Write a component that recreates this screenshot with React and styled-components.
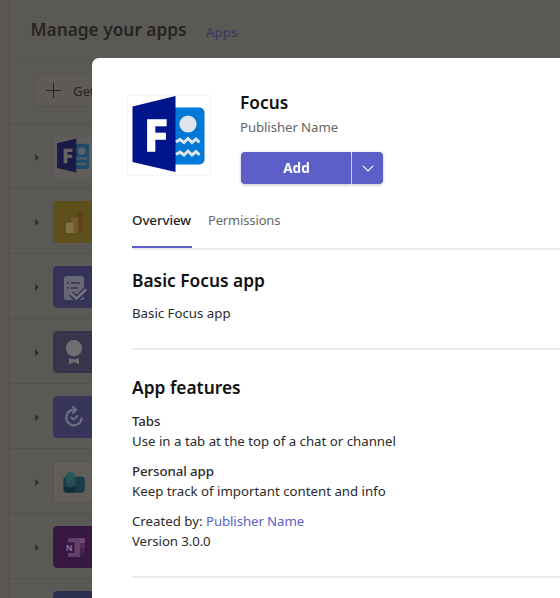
import React from 'react';
import styled, { createGlobalStyle } from 'styled-components';

const GlobalStyle = createGlobalStyle`
  * { box-sizing: border-box; }
  body {
    margin: 0;
    overflow: hidden;
    font-family: 'Noto Sans', 'Open Sans', sans-serif;
    font-size: 13.25px;
    line-height: 20px;
    color: #2b2b2b;
  }
`;

const Screen = styled.div`
  position: relative;
  display: flex;
  width: 100vw;
  height: 100vh;
  overflow: hidden;
  background: #5b5955;
`;

const Rail = styled.div`
  flex: 0 0 10px;
  background: linear-gradient(90deg, #5a5755 0 5px, #565254);
`;

const Page = styled.main`
  flex: 1;
  min-width: 0;
`;

const PageHeader = styled.header`
  display: flex;
  align-items: baseline;
  height: 60px;
  padding: 17px 0 0 20.5px;
  border-bottom: 1px solid #565351;
`;

const PageTitle = styled.h1`
  margin: 0 19px 0 0;
  font-size: 17.3px;
  line-height: 26px;
  font-weight: 600;
  color: #252422;
`;

const PageLink = styled.a`
  position: relative;
  top: 1px;
  font-size: 13.4px;
  font-weight: 500;
  color: #3b3a5e;
`;

const Toolbar = styled.div`
  height: 64px;
  padding: 15px 0 0 24px;
  border-bottom: 1px solid #52504d;
`;

const GetButton = styled.button`
  display: flex;
  align-items: center;
  gap: 11px;
  width: 140px;
  height: 32px;
  padding: 0 0 0 11px;
  border: 1px solid #555250;
  border-radius: 4px;
  background: #5d5a57;
  color: #252422;
  font: inherit;
  white-space: nowrap;
`;

const AppRow = styled.div`
  display: flex;
  align-items: center;
  height: 65px;
  padding: 2px 0 0 25px;
  border-bottom: 1px solid #52504d;
`;

const Caret = styled.svg`
  flex: none;
  width: 5px;
  height: 7px;
  margin-right: 13px;
`;

const Tile = styled.div`
  flex: none;
  display: flex;
  width: 42px;
  height: 42px;
  border-radius: 4px;
  background: ${(p) => p.$color};
  border: 1px solid ${(p) => p.$edge || p.$color};

  svg {
    flex: none;
    width: 42px;
    height: 42px;
    margin: -1px;
  }
`;

const Dialog = styled.section`
  position: absolute;
  top: 58px;
  left: 92px;
  right: 0;
  bottom: 0;
  padding: 36px 0 0 40px;
  overflow: hidden;
  border-radius: 7px 0 0 0;
  background: #fff;
`;

const Summary = styled.div`
  display: flex;
  height: 114px;
`;

const LogoFrame = styled.div`
  flex: none;
  width: 86px;
  height: 84px;
  margin: 0 28px 0 -6px;

  svg {
    display: block;
    width: 86px;
    height: 84px;
    filter: blur(0.7px);
  }
`;

const SummaryText = styled.div`
  display: flex;
  flex-direction: column;
  align-items: flex-start;
`;

const AppName = styled.h2`
  margin: -3px 0 1px;
  font-size: 17.3px;
  line-height: 24px;
  font-weight: 600;
  color: #111;
`;

const Publisher = styled.div`
  height: 20px;
  margin-top: 1px;
  letter-spacing: -0.1px;
  color: #666;
`;

const SplitButton = styled.div`
  display: flex;
  gap: 1px;
  height: 32px;
  margin: 15px 0 0 1px;
  filter: drop-shadow(0 1px 1.5px rgba(0, 0, 0, 0.25));
`;

const AddButton = styled.button`
  width: 110px;
  padding: 0 0 0 1px;
  border: 0;
  border-radius: 4px 0 0 4px;
  background: #5b5fc7;
  color: #fff;
  font: inherit;
  font-size: 13.6px;
  font-weight: 700;
`;

const MenuButton = styled.button`
  display: flex;
  align-items: center;
  justify-content: center;
  width: 31px;
  padding: 0;
  border: 0;
  border-radius: 0 4px 4px 0;
  background: #5b5fc7;
`;

const Tabs = styled.nav`
  display: flex;
  gap: 16px;
  height: 42px;
  border-bottom: 2px solid #ebebeb;
`;

const Tab = styled.a`
  width: ${(p) => (p.$active ? '60px' : 'auto')};
  height: 40px;
  padding-top: 2px;
  white-space: nowrap;
  font-size: ${(p) => (p.$active ? '13.4px' : '12.9px')};
  font-weight: ${(p) => (p.$active ? 500 : 400)};
  letter-spacing: -0.1px;
  color: ${(p) => (p.$active ? '#242424' : '#666')};
  border-bottom: ${(p) => (p.$active ? '2px solid #5b5fc7' : '0')};
`;

const Section = styled.section`
  padding: ${(p) => p.$padding};
  border-bottom: 2px solid #ebebeb;
  white-space: nowrap;
`;

const SectionTitle = styled.h3`
  margin: 0 0 ${(p) => p.$gap};
  font-size: 17.35px;
  line-height: 24px;
  font-weight: 600;
  color: #111;
`;

const Feature = styled.div`
  margin-bottom: 10px;
`;

const FeatureName = styled.div`
  font-weight: 500;
  font-size: 13.3px;
  letter-spacing: -0.1px;
`;

const Line = styled.div`
  height: 20px;
`;

const VersionLine = styled(Line)`
  letter-spacing: -0.1px;
`;

const PublisherLink = styled.a`
  letter-spacing: -0.1px;
  color: #5b5fc7;
`;

function FocusArt({ dark, light, ink, dot, frame }) {
  return (
    <>
      <rect x="1.5" y="1.5" width="83" height="80" fill={frame ? '#fff' : 'none'} stroke={frame || 'none'} />
      <rect x="42" y="13.5" width="36.5" height="57" rx="5" fill={light} />
      <path d="M6.5 12.5 49.5 2v76L6.5 68Z" fill={dark} />
      <text
        x="18"
        y="56.5"
        fontFamily="Noto Sans, sans-serif"
        fontSize="43"
        fontWeight="700"
        textLength="24"
        lengthAdjust="spacingAndGlyphs"
        fill={ink}
        stroke={ink}
        strokeWidth="1.6"
      >
        F
      </text>
      <circle cx="62" cy="30" r="8.6" fill={dot} />
      <path
        d="M50 48 54 45.5 58 48.5 62 44.5 66 48.5 70 45 73.5 48.5M50 60.5 54 58 58 61 62 57 66 61 70 57.5 73.5 61"
        fill="none"
        stroke={dot}
        strokeWidth="3"
      />
    </>
  );
}

const icons = {
  focus: (
    <svg viewBox="0 0 42 42">
      <g transform="translate(1.2 1.7) scale(.445)">
        <FocusArt dark="#191b46" light="#1f4b69" ink="#686665" dot="#596166" />
      </g>
    </svg>
  ),
  powerbi: (
    <svg viewBox="0 0 42 42">
      <rect x="24" y="10" width="5.5" height="22" rx="1" fill="#5d421b" />
      <rect x="18" y="16" width="7.5" height="16" rx="1" fill="#70592b" />
      <rect x="13" y="21.5" width="7.5" height="10.5" rx="1" fill="#827248" />
    </svg>
  ),
  approvals: (
    <svg viewBox="0 0 42 42">
      <rect x="11" y="10" width="20" height="24" rx="2.5" fill="#686775" />
      <path d="M14 17h2m2 0h9M14 22h2m2 0h7" stroke="#35335a" strokeWidth="1.5" fill="none" />
      <path d="M18 27.5 23.5 33 33 24" stroke="#353357" strokeWidth="6" fill="none" />
      <path
        d="M18.5 28 23.5 32.5 32.5 24"
        stroke="#73717d"
        strokeWidth="2.6"
        strokeLinecap="round"
        strokeLinejoin="round"
        fill="none"
      />
    </svg>
  ),
  praise: (
    <svg viewBox="0 0 42 42">
      <circle cx="21" cy="17.3" r="8.2" fill="#6f6e73" />
      <path d="M16 27c3.2 1.6 6.8 1.6 10 0v6.5l-5-2.6-5 2.6Z" fill="#6f6e73" />
    </svg>
  ),
  updates: (
    <svg viewBox="0 0 42 42" fill="none" stroke="#73717f" strokeWidth="2.1">
      <path d="M17 15a7.7 7.7 0 1 0 11.7 6.5M15.5 15.8A7.7 7.7 0 0 1 22 13.8" />
      <path d="m19.5 10.5 3.5 3.3-3.5 3.7" />
      <path d="m17.8 21 2.7 2.6 4.5-4.2" strokeWidth="1.8" />
    </svg>
  ),
  viva: (
    <svg viewBox="0 0 42 42">
      <defs>
        <linearGradient id="vivaBack" x1="0" y1="0" x2="0" y2="1">
          <stop offset="0" stopColor="#163f49" />
          <stop offset="1" stopColor="#1b3948" />
        </linearGradient>
        <linearGradient id="vivaFront" x1="0" y1="0" x2="0" y2="1">
          <stop offset="0" stopColor="#2b5c5d" />
          <stop offset="1" stopColor="#24494f" />
        </linearGradient>
      </defs>
      <rect x="10.3" y="15.5" width="21.5" height="16.2" rx="3.5" fill="url(#vivaBack)" />
      <path d="M11 26h11v5.6h-8a3 3 0 0 1-3-3Z" fill="#102e3a" />
      <rect x="12.5" y="10.5" width="10" height="16" rx="5" fill="url(#vivaFront)" />
    </svg>
  ),
  onenote: (
    <svg viewBox="0 0 42 42">
      <rect x="15" y="12" width="17" height="19" rx="1.5" fill="#664069" />
      <path d="M27 12h3.5a1.5 1.5 0 0 1 1.5 1.5V17h-5Z" fill="#704773" />
      <path d="M27 17h5v5h-5Z" fill="#542f5b" />
      <path d="M27 22h5v4.5h-5Z" fill="#482450" />
      <path d="M27 26.5h5v4.5h-5Z" fill="#3b1c44" />
      <rect x="11" y="16.5" width="10.5" height="10.5" rx="1" fill="#391546" />
      <text x="16.2" y="25" textAnchor="middle" fontFamily="Noto Sans, sans-serif" fontSize="8.5" fontWeight="700" fill="#847987">
        N
      </text>
    </svg>
  ),
  none: null,
};

const apps = [
  { icon: 'focus', color: '#605d5b', edge: '#5d5b5a' },
  { icon: 'powerbi', color: '#5e501b' },
  { icon: 'approvals', color: '#353357' },
  { icon: 'praise', color: '#37354b' },
  { icon: 'updates', color: '#373559' },
  { icon: 'viva', color: '#605d5b', edge: '#575552' },
  { icon: 'onenote', color: '#371840' },
  { icon: 'none', color: '#2b3050' },
];

export default function App() {
  return (
    <Screen>
      <GlobalStyle />
      <Rail />
      <Page>
        <PageHeader>
          <PageTitle>Manage your apps</PageTitle>
          <PageLink>Apps</PageLink>
        </PageHeader>
        <Toolbar>
          <GetButton>
            <svg width="16" height="16" viewBox="0 0 16 16" fill="none" stroke="#252423">
              <path d="M7.5 0v15M0 7.5h15" />
            </svg>
            Get more apps
          </GetButton>
        </Toolbar>
        {apps.map((app) => (
          <AppRow key={app.icon}>
            <Caret viewBox="0 0 5 7">
              <path d="M0 .6h1l3.2 2.9L1 6.4H0Z" fill="#353331" />
            </Caret>
            <Tile $color={app.color} $edge={app.edge}>{icons[app.icon]}</Tile>
          </AppRow>
        ))}
      </Page>
      <Dialog>
        <Summary>
          <LogoFrame>
            <svg viewBox="0 0 86 84">
              <FocusArt dark="#00148c" light="#0078d7" ink="#fff" dot="#e1e4ea" frame="#f0f7fc" />
            </svg>
          </LogoFrame>
          <SummaryText>
            <AppName>Focus</AppName>
            <Publisher>Publisher Name</Publisher>
            <SplitButton>
              <AddButton>Add</AddButton>
              <MenuButton>
                <svg width="12" height="7" viewBox="0 0 12 7" fill="none" stroke="#fff" strokeWidth="1.1">
                  <path d="m.7.7 5.3 5.3L11.3.7" />
                </svg>
              </MenuButton>
            </SplitButton>
          </SummaryText>
        </Summary>
        <Tabs>
          <Tab $active>Overview</Tab>
          <Tab>Permissions</Tab>
        </Tabs>
        <Section $padding="18px 0 25px">
          <SectionTitle $gap="11px">Basic Focus app</SectionTitle>
          <Line>Basic Focus app</Line>
        </Section>
        <Section $padding="25px 0 25px">
          <SectionTitle $gap="12px">App features</SectionTitle>
          <Feature>
            <FeatureName>Tabs</FeatureName>
            <Line>Use in a tab at the top of a chat or channel</Line>
          </Feature>
          <Feature>
            <FeatureName>Personal app</FeatureName>
            <Line>Keep track of important content and info</Line>
          </Feature>
          <Line>
            Created by: <PublisherLink>Publisher Name</PublisherLink>
          </Line>
          <VersionLine>Version 3.0.0</VersionLine>
        </Section>
      </Dialog>
    </Screen>
  );
}
